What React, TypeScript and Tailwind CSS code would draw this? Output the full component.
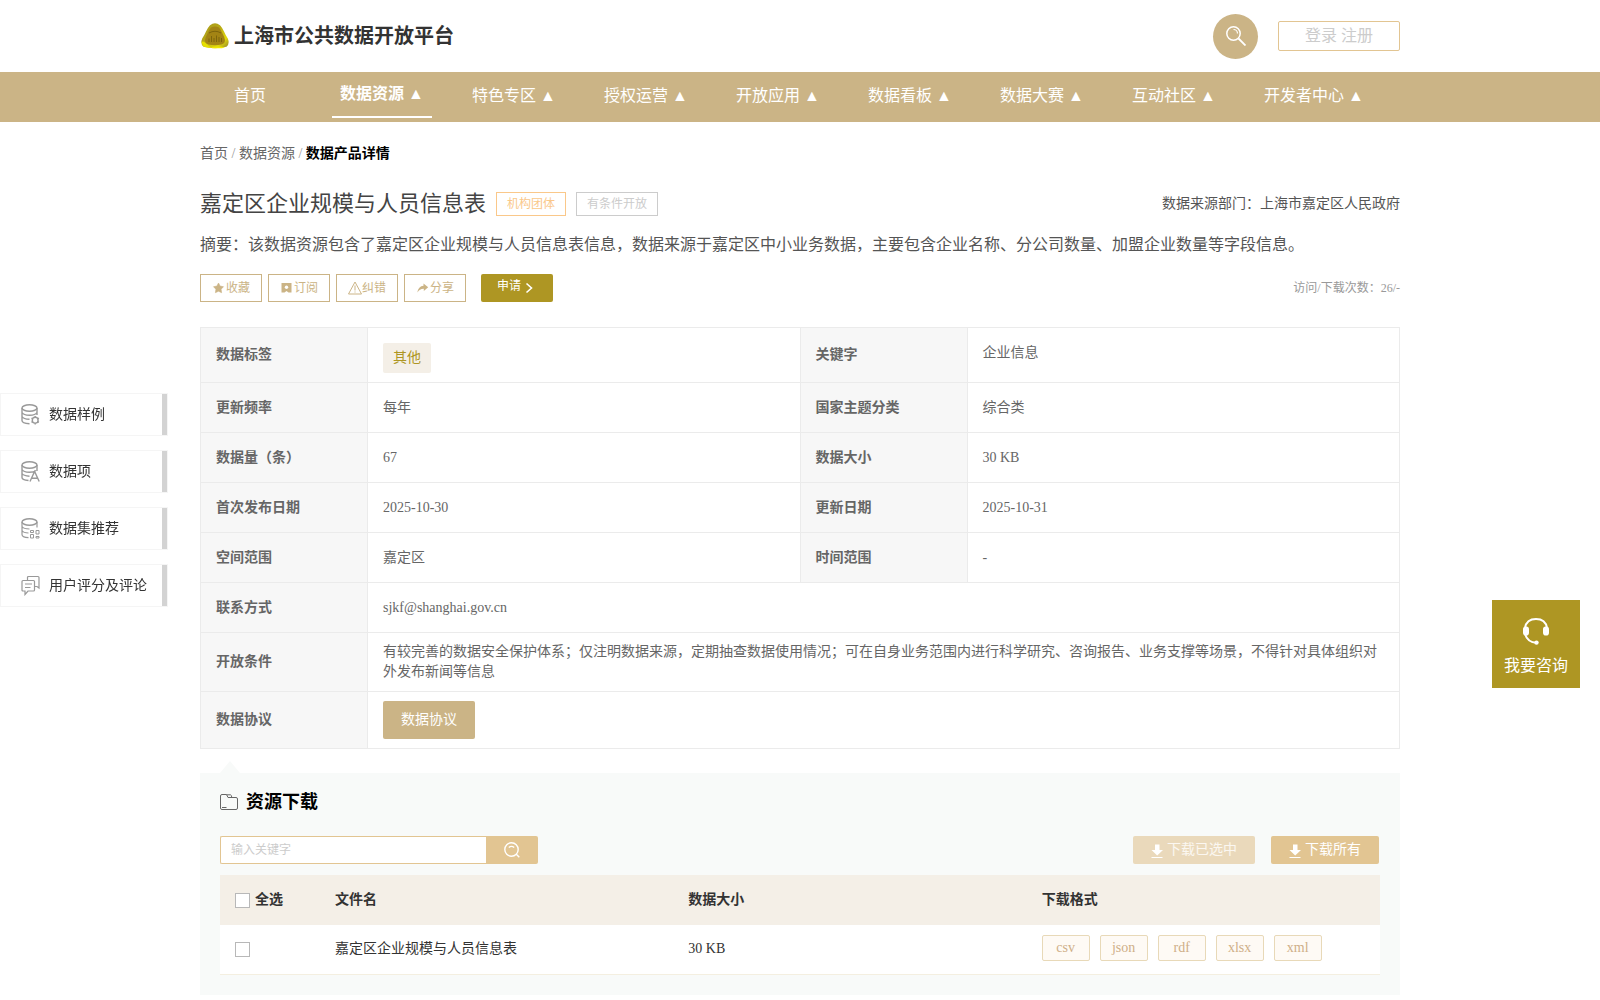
import { useState, type ReactNode } from "react";

const menu = [
  "首页",
  "数据资源",
  "特色专区",
  "授权运营",
  "开放应用",
  "数据看板",
  "数据大赛",
  "互动社区",
  "开发者中心",
];

const formats = ["csv", "json", "rdf", "xlsx", "xml"];

const files = [{ id: 1, name: "嘉定区企业规模与人员信息表", size: "30 KB" }];

const pairs = [
  ["更新频率", "每年", "国家主题分类", "综合类"],
  ["数据量（条）", "67", "数据大小", "30 KB"],
  ["首次发布日期", "2025-10-30", "更新日期", "2025-10-31"],
  ["空间范围", "嘉定区", "时间范围", "-"],
];

function Logo() {
  return (
    <svg viewBox="0 0 28 26" className="h-[26px] w-7" aria-hidden="true">
      <defs>
        <linearGradient id="rim" x1="0" y1="0" x2="1" y2="1">
          <stop offset="0" stopColor="#a89a1c" />
          <stop offset="0.4" stopColor="#b5a616" />
          <stop offset="0.75" stopColor="#e0d80a" />
          <stop offset="1" stopColor="#8f7f30" />
        </linearGradient>
      </defs>
      <path
        d="M9 2.200Q14-1.500 19 2.200Q21.500 5 23 8.500Q24.500 12 26.800 15.500Q29 21 25.500 23.800Q14 26.500 2.500 23.800Q-1 21 1.200 15.500Q3.500 12 5 8.500Q6.500 5 9 2.200Z"
        fill="url(#rim)"
      />
      <path d="M.8 19Q1 23.500 5 24.300Q8 24.800 10 25Q7 22 4 19.500Q2 18 .8 19Z" fill="#e6e000" />
      <path d="M11 25.200H21L24 24.200Q18 22.800 11 24Z" fill="#eee600" />
      <path
        d="M10 4.500Q14 2.500 18 4.500Q20 7 21.500 10.500Q23.500 14 24 17Q24 20.500 20.500 21.500Q14 22.800 7.500 21.500Q4 20.500 4 17Q4.500 14 6.500 10.500Q8 7 10 4.500Z"
        fill="#a38414"
      />
      <path
        d="M8 19V15.500M10.500 19V13M13 19V15M15.500 19V12.500M18 19V14M20.500 19V15M8 10Q14 6.500 20 10"
        fill="none"
        stroke="#7d650c"
        strokeWidth="1"
      />
    </svg>
  );
}

function SearchIcon() {
  return (
    <svg viewBox="0 0 20 20" className="h-5 w-5" fill="none" stroke="#fff" aria-hidden="true">
      <circle cx="7.500" cy="7.500" r="6.700" strokeWidth="1.500" />
      <path d="M7.500 3.500a4 4 0 0 1 4 4" strokeWidth="1.200" />
      <path d="M12.500 12.500l7 7" strokeWidth="1.800" />
    </svg>
  );
}

function Cylinder({ children }: { children: ReactNode }) {
  return (
    <svg viewBox="0 0 19 21" className="h-[21px] w-[19px]" fill="none" stroke="#999" strokeWidth="1.400" aria-hidden="true">
      <ellipse cx="8.500" cy="4" rx="7.500" ry="3.200" />
      {children}
    </svg>
  );
}

const anchors = [
  {
    label: "数据样例",
    icon: (
      <Cylinder>
        <path d="M1 4v12.500c0 1.800 3 3 7.500 3.200M16 4v7M1 8.500c1 2 4 2.700 7.500 2.700s6.500-.7 7.500-2.700M1 12.500c1 2 3.500 2.700 7.500 2.700" />
        <circle cx="14.200" cy="16.200" r="2.900" />
        <path d="M14.200 12v1.500M14.200 19v1.500M10.500 14l1.300.8M16.600 17.600l1.300.8M10.500 18.400l1.300-.8M16.600 14.800l1.300-.8" />
      </Cylinder>
    ),
  },
  {
    label: "数据项",
    icon: (
      <Cylinder>
        <path d="M1 4v12.500c0 1.500 2.500 2.700 6.500 3M16 4v6M1 8.500c1 2 4 2.700 7.500 2.700s5-.5 6.500-1.700M1 12.500c1 1.700 3.500 2.500 7.500 2.700M9 20.500l4.600-10 4.600 10M10.700 17.300h6" />
      </Cylinder>
    ),
  },
  {
    label: "数据集推荐",
    icon: (
      <Cylinder>
        <path d="M1 4v12.500c0 1.800 2.500 3 6.500 3.200M16 4v5.500M1 8.500c1 1.700 4 2.500 7.500 2.500M1 12.500c1 1.700 3 2.500 6.500 2.500" strokeWidth="1.200" />
        <path d="M9.500 12.500h3v2h-3zM15 12.500h3v3.500h-3zM9.500 16.500h3V20h-3zM15 18.500h3V20h-3z" strokeWidth="1" />
      </Cylinder>
    ),
  },
  {
    label: "用户评分及评论",
    icon: (
      <svg viewBox="0 0 19 21" className="h-[21px] w-[19px]" fill="none" stroke="#999" strokeWidth="1.200" aria-hidden="true">
        <path d="M2 5.500h10.500q1 0 1 1V15q0 1-1 1H7l-3 3.500V16H2q-1 0-1-1V6.500q0-1 1-1zM6.500 5V2.500q0-1 1-1H17q1 0 1 1V13l-2-1.500h-2.500M4 9h7M4 12.500h5.500" />
      </svg>
    ),
  },
];

function DownloadIcon() {
  return (
    <svg viewBox="0 0 12 14" className="mt-0.5 h-3.5 w-3" fill="#fff" aria-hidden="true">
      <path d="M4 .5h4.500v5.500H12L6.200 11.500 .5 6H4zM.5 13h11v1H.5z" />
    </svg>
  );
}

const actions = [
  {
    label: "收藏",
    icon: (
      <svg viewBox="0 0 14 14" className="h-3.5 w-3.5" fill="currentColor" aria-hidden="true">
        <path d="M6.500 2l1.600 3.100 3.400.6-2.400 2.500.5 3.500-3.100-1.500-3.100 1.500.5-3.500L1.500 5.700l3.400-.6z" stroke="currentColor" strokeWidth=".6" strokeLinejoin="round" />
      </svg>
    ),
  },
  {
    label: "订阅",
    icon: (
      <svg viewBox="0 0 14 14" className="h-3.5 w-3.5" aria-hidden="true">
        <path d="M1.500 2h10v9.500H8.500L6.500 10 4.500 11.500h-3z" fill="currentColor" />
        <circle cx="6.500" cy="6.300" r="1.700" fill="#fff" />
      </svg>
    ),
  },
  {
    label: "纠错",
    icon: (
      <svg viewBox="0 0 14 14" className="h-3.5 w-3.5" fill="none" stroke="currentColor" aria-hidden="true">
        <path d="M7 1L13.500 13H.5zM7 4.500v5M7 10.500v1" />
      </svg>
    ),
  },
  {
    label: "分享",
    icon: (
      <svg viewBox="0 0 14 14" className="h-3.5 w-3.5" fill="currentColor" aria-hidden="true">
        <path d="M7.500 2.500l4.700 3.700-4.400 3.800V7.800C5 7.700 3 9 1.500 11.500 1.800 7.500 4.300 5 7.500 4.800z" />
      </svg>
    ),
  },
];

const labelCell = "w-[167px] border border-[#ebebeb] bg-[#f7f7f7] px-[15px] text-left font-bold";
const valueCell = "border border-[#ebebeb] px-[15px]";
const checkbox = "h-[15px] w-[15px] shrink-0 appearance-none border border-[#b8b8b8] bg-white checked:bg-[#cbb486]";

export default function App() {
  const [keyword, setKeyword] = useState("");
  const [selected, setSelected] = useState<number[]>([]);

  function toggle(id: number) {
    setSelected((s) => (s.includes(id) ? s.filter((x) => x !== id) : [...s, id]));
  }

  function toggleAll() {
    setSelected(selected.length === files.length ? [] : files.map((f) => f.id));
  }

  return (
    <div className="bg-white font-['Liberation_Serif','Noto_Sans_CJK_SC',serif] text-sm text-[#666]">
      <header className="mx-auto flex h-[72px] max-w-[1200px] items-center justify-between">
        <div className="flex items-center gap-[5px] pl-px">
          <Logo />
          <h1 className="text-xl font-bold text-[#333]">上海市公共数据开放平台</h1>
        </div>
        <div className="flex items-center gap-5">
          <button type="button" aria-label="搜索" className="flex h-[45px] w-[45px] items-center justify-center rounded-full bg-[#cbb486]">
            <SearchIcon />
          </button>
          <div className="flex h-[30px] w-[122px] items-center justify-center gap-1 rounded-xs border border-[#e2c592] text-base text-[#ccc]">
            <a href="#login">登录</a>
            <a href="#register">注册</a>
          </div>
        </div>
      </header>

      <nav className="bg-[#cbb486]">
        <div className="mx-auto flex h-[50px] max-w-[1200px] gap-8 text-base text-white">
          {menu.map((item, i) => (
            <a
              key={item}
              href="#nav"
              className={
                i === 1
                  ? "flex h-[46px] min-w-[100px] items-center justify-center border-b-2 border-white font-bold whitespace-nowrap"
                  : "flex h-12 min-w-[100px] items-center justify-center px-2 whitespace-nowrap"
              }
            >
              {i === 0 ? item : `${item} ▲`}
            </a>
          ))}
        </div>
      </nav>

      <main className="mx-auto max-w-[1200px] pb-[5px]">
        <div className="pt-[22px] leading-5">
          <a href="#home">首页</a> <span className="text-[#999]">/</span> <a href="#data">数据资源</a>{" "}
          <span className="text-[#999]">/</span> <b className="text-black">数据产品详情</b>
        </div>

        <div className="mt-[23px] flex h-[34px] items-center text-[#555]">
          <h2 className="text-[22px] text-[#444]">嘉定区企业规模与人员信息表</h2>
          <span className="ml-2.5 border border-[#fac88a] px-2.5 text-xs leading-[22px] text-[#fac88a]">机构团体</span>
          <span className="ml-2.5 border border-[#ccc] px-2.5 text-xs leading-[22px] text-[#ccc]">有条件开放</span>
          <span className="ml-auto">数据来源部门：上海市嘉定区人民政府</span>
        </div>

        <p className="mt-3 text-base leading-6 text-[#555]">
          摘要：该数据资源包含了嘉定区企业规模与人员信息表信息，数据来源于嘉定区中小业务数据，主要包含企业名称、分公司数量、加盟企业数量等字段信息。
        </p>

        <div className="mt-[17px] flex items-center gap-1.5 text-xs">
          {actions.map((a) => (
            <button key={a.label} type="button" className="flex h-7 w-[62px] items-center justify-center border border-[#cbb486] text-[#cbb486]">
              {a.icon}
              {a.label}
            </button>
          ))}
          <button type="button" className="ml-[9px] flex h-7 w-[72px] items-center gap-1 rounded-xs bg-[#ae9623] pb-1 pl-4 text-white">
            申请
            <svg viewBox="0 0 8 12" className="mt-1 h-3 w-2" fill="none" stroke="#fff" strokeWidth="1.600" aria-hidden="true">
              <path d="M1.500 1.500L6.500 6l-5 4.500" />
            </svg>
          </button>
          <span className="ml-auto text-[#999]">访问/下载次数：26/-</span>
        </div>

        <table className="mt-[25px] w-full table-fixed border-collapse leading-5">
          <tbody>
            <tr className="h-[55px]">
              <th className={labelCell}>数据标签</th>
              <td className={`${valueCell} pt-[15px] align-top`}>
                <span className="inline-block rounded-xs bg-[#f4efe7] px-2.5 leading-[30px] text-[#ae9623]">其他</span>
              </td>
              <th className={labelCell}>关键字</th>
              <td className={`${valueCell} pt-[15px] align-top`}>企业信息</td>
            </tr>
            {pairs.map(([k1, v1, k2, v2]) => (
              <tr key={k1} className="h-[50px]">
                <th className={labelCell}>{k1}</th>
                <td className={valueCell}>{v1}</td>
                <th className={labelCell}>{k2}</th>
                <td className={valueCell}>{v2}</td>
              </tr>
            ))}
            <tr className="h-[50px]">
              <th className={labelCell}>联系方式</th>
              <td colSpan={3} className={valueCell}>
                sjkf@shanghai.gov.cn
              </td>
            </tr>
            <tr className="h-[59px]">
              <th className={labelCell}>开放条件</th>
              <td colSpan={3} className={valueCell}>
                有较完善的数据安全保护体系；仅注明数据来源，定期抽查数据使用情况；可在自身业务范围内进行科学研究、咨询报告、业务支撑等场景，不得针对具体组织对外发布新闻等信息
              </td>
            </tr>
            <tr className="h-[57px]">
              <th className={labelCell}>数据协议</th>
              <td colSpan={3} className={valueCell}>
                <button type="button" className="block h-[38px] w-[92px] rounded-xs bg-[#cbb486] text-white">
                  数据协议
                </button>
              </td>
            </tr>
          </tbody>
        </table>

        <svg viewBox="0 0 20 12" className="mt-3 ml-5 block h-3 w-5" aria-hidden="true">
          <path d="M10 0L20 12H0z" fill="#f8faf9" />
        </svg>
        <section className="bg-[#f8faf9] px-5 pt-4 pb-5">
          <h3 className="flex h-[26px] items-center gap-2 text-lg font-bold text-black">
            <svg viewBox="0 0 18 16" className="h-4 w-[18px]" fill="none" stroke="#666" aria-hidden="true">
              <path d="M2 .5h4.500L8 3.500h8q1.500 0 1.500 1.500v9q0 1.500-1.500 1.500H2Q.5 15.500.5 14V2Q.5.500 2 .5zM6.500.800h4q1 0 1.300 2.700M2 13.500h4.500" />
            </svg>
            资源下载
          </h3>

          <div className="mt-[21px] flex items-center">
            <input
              type="text"
              aria-label="输入关键字"
              placeholder="输入关键字"
              value={keyword}
              onChange={(e) => setKeyword(e.target.value)}
              className="h-7 w-[266px] rounded-l-xs border border-r-0 border-[#e2c592] bg-white px-2.5 text-xs placeholder:text-[#ccc] focus:outline-none"
            />
            <button type="button" aria-label="查询" className="flex h-7 w-[52px] items-center justify-center rounded-r-xs bg-[#e2c592]">
              <svg viewBox="0 0 16 16" className="h-4 w-4" fill="none" stroke="#fff" strokeWidth="1.400" aria-hidden="true">
                <circle cx="7.500" cy="7.500" r="6.700" />
                <path d="M4.800 5.500q2.700-2.200 5.400 0M12.300 12.300l3 3" />
              </svg>
            </button>
            <button type="button" className="ml-auto flex h-7 w-[122px] items-center justify-center gap-1 rounded-xs bg-[#ead9bb] text-white/80">
              <DownloadIcon />
              下载已选中
            </button>
            <button type="button" className="mr-px ml-4 flex h-7 w-[108px] items-center justify-center gap-1 rounded-xs bg-[#e2c592] text-white">
              <DownloadIcon />
              下载所有
            </button>
          </div>

          <table className="mt-[11px] w-full table-fixed border-collapse text-[#333]">
            <thead>
              <tr className="h-[50px] bg-[#f4efe7] text-left">
                <th className="w-[100px] pl-[15px]">
                  <label className="flex items-center gap-[5px]">
                    <input type="checkbox" checked={selected.length === files.length} onChange={toggleAll} className={checkbox} />
                    全选
                  </label>
                </th>
                <th className="px-[15px]">文件名</th>
                <th className="px-[15px]">数据大小</th>
                <th className="px-[15px]">下载格式</th>
              </tr>
            </thead>
            <tbody>
              {files.map((f) => (
                <tr key={f.id} className="h-[49px] border-b border-[#f4efe0] bg-white">
                  <td className="pl-[15px]">
                    <input type="checkbox" aria-label={f.name} checked={selected.includes(f.id)} onChange={() => toggle(f.id)} className={`block ${checkbox}`} />
                  </td>
                  <td className="px-[15px]">{f.name}</td>
                  <td className="px-[15px]">{f.size}</td>
                  <td className="px-[15px]">
                    <div className="flex gap-2.5 pb-0.5">
                      {formats.map((x) => (
                        <button key={x} type="button" className="h-[26px] w-12 rounded-xs border border-[#e8d9b8] bg-[#fefaf5] text-[#cfaf88]">
                          {x}
                        </button>
                      ))}
                    </div>
                  </td>
                </tr>
              ))}
            </tbody>
          </table>
        </section>
      </main>

      {/* page anchors, pinned to the left edge */}
      <aside className="fixed top-[393px] left-0 flex flex-col gap-3.5">
        {anchors.map((a) => (
          <a
            key={a.label}
            href="#section"
            className="flex h-[43px] w-[168px] items-center gap-[9px] border border-[#f5f5f5] bg-white pl-5 text-[#333]"
          >
            {a.icon}
            {a.label}
            <span className="ml-auto w-[5px] self-stretch bg-[#d3d3d3]" />
          </a>
        ))}
      </aside>

      <button type="button" className="fixed top-[600px] right-5 flex h-[88px] w-[88px] flex-col items-center bg-[#ae9623] pt-[18px] text-base text-white">
        <svg viewBox="0 0 26 27" className="h-[27px] w-[26px]" aria-hidden="true">
          <path d="M2 10C3 4 7.500 1 13 1s10 3 11 9M2 16c1.500 5 5.500 8.500 11.500 8.800" fill="none" stroke="#fff" strokeWidth="2" />
          <rect x="0" y="8.500" width="6" height="9" rx="2.800" fill="#fff" />
          <rect x="20" y="8.500" width="6" height="9" rx="2.800" fill="#fff" />
          <circle cx="13.500" cy="24.600" r="2.200" fill="#fff" />
        </svg>
        <span className="mt-[9px]">我要咨询</span>
      </button>
    </div>
  );
}
